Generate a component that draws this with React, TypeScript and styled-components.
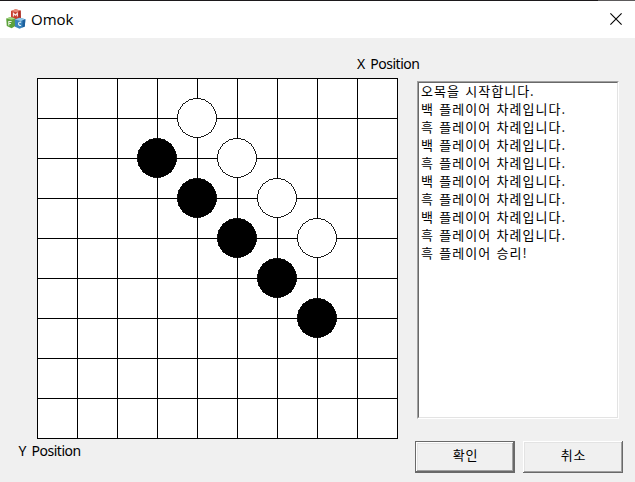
import React from "react";
import styled, { createGlobalStyle } from "styled-components";

const GlobalStyle = createGlobalStyle`
  * { box-sizing: border-box; }
  body { margin: 0; background: #f0f0f0; overflow: hidden; }
`;

const Dialog = styled.div`
  width: 635px;
  height: 482px;
  display: flex;
  flex-direction: column;
  background: #f0f0f0;
  color: #000;
  font-family: "Noto Sans", "Noto Sans CJK KR", sans-serif;
`;

const TitleBar = styled.header`
  height: 38px;
  flex: none;
  display: flex;
  align-items: center;
  padding: 0 13px 1px 6px;
  background: linear-gradient(90deg, #1c191b 598px, #5c5a5b 598px) top / 100% 1px
    no-repeat #fff;
`;

const Title = styled.h1`
  flex: 1;
  margin: 1px 0 0 5px;
  font-family: "Open Sans", sans-serif;
  font-size: 15px;
  line-height: 20px;
  font-weight: 400;
`;

const CloseButton = styled.button`
  width: 12px;
  height: 12px;
  margin-top: 1px;
  padding: 0;
  border: 0;
  background: none;
  display: flex;
`;

const Content = styled.main`
  flex: 1;
  display: flex;
`;

const BoardColumn = styled.section`
  width: 417px;
  padding-top: 16px;
  display: flex;
  flex-direction: column;
`;

const AxisLabel = styled.span<{ $axis: "x" | "y" }>`
  height: 20px;
  margin-left: ${(p) => (p.$axis === "x" ? 357 : 18.5)}px;
  margin-top: ${(p) => (p.$axis === "x" ? 0 : 2)}px;
  font-size: 14px;
  line-height: 20px;
  letter-spacing: -0.5px;
  word-spacing: 2.5px;
  white-space: nowrap;
`;

const BoardSvg = styled.svg`
  display: block;
  flex: none;
  margin: 4px 0 0 37px;
`;

const SideColumn = styled.section`
  display: flex;
  flex-direction: column;
  padding-top: 43px;
`;

const LogFrame = styled.div`
  width: 202px;
  height: 338px;
  border: 1px solid;
  border-color: #a0a0a0 #fff #fff #a0a0a0;
`;

const LogList = styled.ul`
  height: 100%;
  margin: 0;
  padding: 0 0 0 2px;
  list-style: none;
  background: #fff;
  border: 1px solid;
  border-color: #696969 #e3e3e3 #e3e3e3 #696969;
`;

const LogRow = styled.li`
  height: 18px;
  font-family: "Noto Sans CJK KR", sans-serif;
  font-size: 13px;
  line-height: 16px;
  letter-spacing: 1px;
  word-spacing: 1.5px;
  white-space: nowrap;
`;

const ButtonRow = styled.div`
  display: flex;
  gap: 8px;
  margin: 22px 0 0 -2px;
`;

const Button = styled.button<{ $primary?: boolean }>`
  width: 100px;
  height: 32px;
  padding: 0;
  background: #f0f0f0;
  color: #000;
  border: ${(p) => (p.$primary ? "1px solid #696969" : "0")};
`;

const ButtonFace = styled.span`
  display: flex;
  height: 100%;
  align-items: center;
  justify-content: center;
  padding: 0 0 4px 1px;
  font-family: "Noto Sans CJK KR", sans-serif;
  font-size: 13px;
  line-height: 18px;
  letter-spacing: 0.9px;
  box-shadow: inset -1px -1px #696969, inset 1px 1px #fff,
    inset -2px -2px #a0a0a0, inset 2px 2px #e3e3e3;
`;

const CELL = 40;
const LINES = Array.from({ length: 10 }, (_, i) => i * CELL);

type Stone = { col: number; row: number; color: "black" | "white" };

const STONES: Stone[] = [
  { col: 4, row: 1, color: "white" },
  { col: 5, row: 2, color: "white" },
  { col: 6, row: 3, color: "white" },
  { col: 7, row: 4, color: "white" },
  { col: 3, row: 2, color: "black" },
  { col: 4, row: 3, color: "black" },
  { col: 5, row: 4, color: "black" },
  { col: 6, row: 5, color: "black" },
  { col: 7, row: 6, color: "black" },
];

const LOG = [
  "오목을 시작합니다.",
  "백 플레이어 차례입니다.",
  "흑 플레이어 차례입니다.",
  "백 플레이어 차례입니다.",
  "흑 플레이어 차례입니다.",
  "백 플레이어 차례입니다.",
  "흑 플레이어 차례입니다.",
  "백 플레이어 차례입니다.",
  "흑 플레이어 차례입니다.",
  "흑 플레이어 승리!",
];

function Board() {
  return (
    <BoardSvg width="361" height="361" shapeRendering="crispEdges">
      <rect width="361" height="361" fill="#fff" />
      {LINES.map((p) => (
        <React.Fragment key={p}>
          <rect x={p} y={0} width={1} height={361} />
          <rect x={0} y={p} width={361} height={1} />
        </React.Fragment>
      ))}
      {STONES.map((s) => (
        <circle
          key={`${s.col}-${s.row}`}
          cx={s.col * CELL}
          cy={s.row * CELL}
          r={19.5}
          fill={s.color}
          stroke="#000"
          strokeWidth={0.9}
        />
      ))}
    </BoardSvg>
  );
}

function BlocksIcon() {
  return (
    <svg width="20" height="20" viewBox="0 0 20 20">
      <path d="M5 2 9.5.2 14.6 1.6 14.8 9 10 11 5 9.5Z" fill="#c9402f" />
      <path d="M5 2 9.5.2 14.6 1.6 10.5 3.2Z" fill="#e88a78" />
      <path d="M12.6 2.5 14.6 1.6 14.8 9l-2.2.9Z" fill="#a82f26" />
      <path d="M.2 9.4 4.6 8 9.4 9.4v7.6L5.6 19.2.8 17Z" fill="#5da23c" />
      <path d="M.2 9.4 4.6 8 9.4 9.4 5.4 10.8Z" fill="#a5d582" />
      <path d="M8.8 10.4 13.6 8.8l5.8 1.4-.6 7.2-5.3 2.4-4.5-2Z" fill="#3a85bd" />
      <path d="M8.8 10.4 13.6 8.8l5.8 1.4-4.6 1.8Z" fill="#92c8e8" />
      <path d="m16.6 11.3 2.8-1.1-.6 7.2-2.4 1.1Z" fill="#1d5f9c" />
      <g fill="none" stroke="#fff" strokeWidth="1.1" opacity=".88">
        <path d="M7.4 7.6V4.3l2 1.9 2-1.9v3.3" />
        <path d="M5.6 12.5H2.8v4M2.8 14.5H5" />
        <path d="M15.2 13.2c-3.4-.9-3.8 3.7-.1 3.3" />
      </g>
    </svg>
  );
}

export default function App() {
  return (
    <>
      <GlobalStyle />
      <Dialog>
        <TitleBar>
          <BlocksIcon />
          <Title>Omok</Title>
          <CloseButton aria-label="Close">
            <svg width="12" height="12" viewBox="0 0 12 12">
              <path d="M.4.4 11.6 11.6M11.6.4.4 11.6" stroke="#000" strokeWidth="1.1" />
            </svg>
          </CloseButton>
        </TitleBar>
        <Content>
          <BoardColumn>
            <AxisLabel $axis="x">X Position</AxisLabel>
            <Board />
            <AxisLabel $axis="y">Y Position</AxisLabel>
          </BoardColumn>
          <SideColumn>
            <LogFrame>
              <LogList>
                {LOG.map((line, i) => (
                  <LogRow key={i}>{line}</LogRow>
                ))}
              </LogList>
            </LogFrame>
            <ButtonRow>
              <Button $primary>
                <ButtonFace>확인</ButtonFace>
              </Button>
              <Button>
                <ButtonFace>취소</ButtonFace>
              </Button>
            </ButtonRow>
          </SideColumn>
        </Content>
      </Dialog>
    </>
  );
}
